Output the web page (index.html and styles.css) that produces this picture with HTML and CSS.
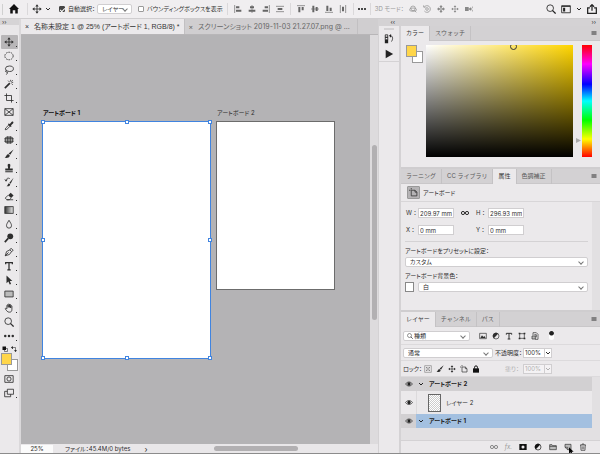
FILE: index.html
```html
<!DOCTYPE html>
<html lang="ja">
<head>
  <meta charset="UTF-8" />
  <meta name="viewport" content="width=device-width, initial-scale=1.0" />
  <title>名称未設定 1</title>
  <link rel="stylesheet" href="styles.css">
</head>
<body>
  <svg class="sprite" aria-hidden="true">
    <symbol id="i-home" viewBox="0 0 12 12"><path class="f" d="M6 0 12 6H10.500V11.500H7.500V7.500H4.500V11.500H1.500V6H0Z"/></symbol>
    <symbol id="i-move" viewBox="0 0 12 12"><path d="M6 2V10M2 6H10"/><path class="f" d="M6 .3 8 3H4ZM6 11.700 4 9H8ZM.3 6 3 4V8ZM11.700 6 9 8V4Z"/></symbol>
    <symbol id="i-chev" viewBox="0 0 12 12"><path class="thick" d="M2 4 6 8 10 4"/></symbol>
    <symbol id="i-search" viewBox="0 0 12 12"><circle cx="5" cy="5" r="4"/><path class="mid" d="M7.700 7.700 11.500 11.500"/></symbol>
    <symbol id="i-al" viewBox="0 0 12 12"><path d="M1 0V12"/><path class="f" d="M3 2H8V5H3ZM3 7H11V10H3Z"/></symbol>
    <symbol id="i-ac" viewBox="0 0 12 12"><path d="M6 0V12"/><path class="f" d="M3 2H9V5H3ZM1 7H11V10H1Z"/></symbol>
    <symbol id="i-ar" viewBox="0 0 12 12"><path d="M11 0V12"/><path class="f" d="M4 2H9V5H4ZM1 7H9V10H1Z"/></symbol>
    <symbol id="i-dist" viewBox="0 0 12 12"><path d="M0 2H12M0 10H12"/><path class="f" d="M2.500 4.500H9.500V7.500H2.500Z"/></symbol>
    <symbol id="i-at" viewBox="0 0 12 12"><path d="M0 1H12"/><path class="f" d="M2 3H5V11H2ZM7 3H10V8H7Z"/></symbol>
    <symbol id="i-am" viewBox="0 0 12 12"><path d="M0 6H12"/><path class="f" d="M2 1H5V11H2ZM7 3H10V9H7Z"/></symbol>
    <symbol id="i-ab" viewBox="0 0 12 12"><path d="M0 11H12"/><path class="f" d="M2 1H5V9H2ZM7 4H10V9H7Z"/></symbol>
    <symbol id="i-disv" viewBox="0 0 12 12"><path d="M2 0V12M10 0V12"/><path class="f" d="M4.500 2.500H7.500V9.500H4.500Z"/></symbol>
    <symbol id="i-dots" viewBox="0 0 12 12"><circle class="f" cx="1.500" cy="6" r="1.500"/><circle class="f" cx="6" cy="6" r="1.500"/><circle class="f" cx="10.500" cy="6" r="1.500"/></symbol>
    <symbol id="i-orbit" viewBox="0 0 12 12"><ellipse cx="6" cy="7" rx="5.500" ry="2.500"/><circle cx="6" cy="5" r="3.500"/><path d="M8 8 11 11"/></symbol>
    <symbol id="i-roll" viewBox="0 0 12 12"><circle cx="6" cy="6" r="2"/><path d="M2 3A5 5 0 1 1 2 9M1 .5V3.200H4"/></symbol>
    <symbol id="i-slide" viewBox="0 0 12 12"><path class="f" d="M6 0 8.500 3H7V4.500H5V3H3.500ZM6 12 3.500 9H5V7.500H7V9H8.500ZM0 6 3 3.500V5H4.500V7H3V8.500ZM12 6 9 8.500V7H7.500V5H9V3.500Z"/><circle cx="6" cy="6" r="1.500"/></symbol>
    <symbol id="i-cam" viewBox="0 0 12 12"><path class="f" d="M-1 3H5.500V9H-1ZM5 6 9 3.500V8.500Z"/><path d="M13 1 9.500 6 13 11"/></symbol>
    <symbol id="i-work" viewBox="0 0 12 12"><path d="M.8 2H11.200V10.500H.8ZM1 3H11"/><path class="f" d="M2.500 4.500H5V9H2.500Z"/></symbol>
    <symbol id="i-share" viewBox="0 0 12 12"><path class="mid" d="M3.500 4.500H.8V11.200H11.200V4.500H8.500M6 8V1M3.500 3.300 6 .8 8.500 3.300"/></symbol>

    <symbol id="i-marq" viewBox="0 0 12 12"><ellipse cx="6" cy="6" rx="5" ry="4.500" stroke-dasharray="2 1"/></symbol>
    <symbol id="i-lasso" viewBox="0 0 12 12"><ellipse cx="6.500" cy="4.500" rx="4.800" ry="3.300"/><path d="M3 6.500C1 7 2 9 3.500 8.500S4 11 2.500 11.500"/></symbol>
    <symbol id="i-wand" viewBox="0 0 12 12"><path class="thick" d="M1 11 7 5"/><path d="M8 1V3M11 4H9M10.500 1.500 9 3M5 2 6.500 3.500M10.500 7 9 5.500"/></symbol>
    <symbol id="i-crop" viewBox="0 0 12 12"><path d="M3 .5V9H11.500M.5 3H9V11.500"/></symbol>
    <symbol id="i-frame" viewBox="0 0 12 12"><path d="M1 2H11V10H1ZM1 2 11 10M11 2 1 10"/></symbol>
    <symbol id="i-drop" viewBox="0 0 12 12"><path d="M1.500 10.500 2 8.500 6 4.500 7.500 6 3.500 10Z"/><path class="f" d="M5.500 3 7 3.500 9 1.200C11-.2 12 1.500 10.800 3L8.500 5 9 6.500 8 7.200 4.800 4Z"/></symbol>
    <symbol id="i-heal" viewBox="0 0 12 12"><rect class="g" x="1.500" y="2.500" width="9" height="7" rx="2"/><path d="M.5 4.500H11.500M.5 7.500H11.500M4.500 1.500V10.500M7.500 1.500V10.500"/></symbol>
    <symbol id="i-brush" viewBox="0 0 12 12"><path class="f" d="M11.500.5 7.500 7 5.500 5.300ZM5 6 7 7.700C6.500 10.500 3.500 11 .8 10.500 3 9.500 2.500 6.500 5 6Z"/></symbol>
    <symbol id="i-stamp" viewBox="0 0 12 12"><path class="f" d="M4.500 3.500C3.500 0 8.500 0 7.500 3.500L7 6.500H10.500V9H1.500V6.500H5ZM1.500 10H10.500V11.200H1.500Z"/></symbol>
    <symbol id="i-hist" viewBox="0 0 12 12"><path class="f" d="M11.500 1 8 8 6.500 7ZM6 7.500 7.500 9C7 11 5 11.500 3 11 5 10 4.500 8 6 7.500Z"/><path d="M1 3 2.500 5 4 3M2.500 5C2 2 5 .5 7 2"/></symbol>
    <symbol id="i-erase" viewBox="0 0 12 12"><path class="f" d="M5 5 8 2 11.500 5.500 8.500 8.500Z"/><path d="M5 5 1.500 8.500 3.500 10.500H6.500L8.500 8.500M3 10.500H11"/></symbol>
    <symbol id="i-grad" viewBox="0 0 12 12"><defs><linearGradient id="gg"><stop stop-color="#333"/><stop offset="1" stop-color="#eee"/></linearGradient></defs><rect x="1" y="2" width="10" height="8" style="fill:url(#gg)"/></symbol>
    <symbol id="i-blur" viewBox="0 0 12 12"><path d="M6 1.500C8 5 9 6 9 8A3 3 0 0 1 3 8C3 6 4 5 6 1.500Z"/></symbol>
    <symbol id="i-dodge" viewBox="0 0 12 12"><circle class="f" cx="7.500" cy="4" r="3.500"/><path class="thick" d="M5 6.500 1 11"/></symbol>
    <symbol id="i-pen" viewBox="0 0 12 12"><path d="M1.500 10.500 3 5.500 7 3.500 9 5.500 6.500 9ZM1.500 10.500 5.500 6.500M7 3.500 8.500 1.500 11 4 9 5.500"/></symbol>
    <symbol id="i-text" viewBox="0 0 12 12"><path class="mid" d="M2 4V2H10V4M6 2V10.500M4 10.500H8"/></symbol>
    <symbol id="i-arrow" viewBox="0 0 12 12"><path class="f" d="M3 .5V10L5.300 7.800 6.800 11.500 8.500 10.800 7 7.300H10Z"/></symbol>
    <symbol id="i-rect" viewBox="0 0 12 12"><path class="g" d="M1 2.500H11V9.500H1Z"/></symbol>
    <symbol id="i-hand" viewBox="0 0 12 12"><path d="M3.500 7V3C3.500 2 5 2 5 3V5.500M5 5V1.800C5 1 6.500 1 6.500 1.800V5.500M6.500 5V2.300C6.500 1.500 8 1.500 8 2.300V6M8 6V3.500C8 3 9.500 3 9.500 3.700V7.500C9.500 10 8.500 11 6.500 11 4 11 3.500 9.500 1.500 7 1.500 6 2.800 6 3.500 7"/></symbol>
    <symbol id="i-swap" viewBox="0 0 12 12"><path d="M3 6V3H9V10"/><path class="f" d="M0 3 3.500 0V6ZM9 12 6 8.500H12Z"/></symbol>
    <symbol id="i-def" viewBox="0 0 12 12"><path d="M5 5H11V11H5Z"/><path class="f" d="M1 1H8V8H1Z"/></symbol>
    <symbol id="i-mask" viewBox="0 0 12 12"><path d="M1 2H11V10H1Z"/><circle cx="6" cy="6" r="2.500"/></symbol>
    <symbol id="i-screen" viewBox="0 0 12 12"><path d="M4 1.500H11.500V7.500H4ZM4 4H.8V10.500H8V7.500"/></symbol>

    <symbol id="i-hpanel" viewBox="0 0 12 12"><path d="M1.500 1H4.500V4H1.500ZM1.500 4H4.500V7H1.500ZM7 2C11 2 11 6 9 9"/><path class="f" d="M1 7H5V11H1ZM6 2 8.500 0V4.500Z"/></symbol>
    <symbol id="i-play" viewBox="0 0 12 12"><path class="f" d="M2 1 11 6 2 11Z"/></symbol>
    <symbol id="i-menu" viewBox="0 0 12 12"><path d="M1 3H11M1 5H11M1 7H11M1 9H11"/></symbol>
    <symbol id="i-board" viewBox="0 0 12 12"><path d="M3 0V2M0 3H2M3 3H8L10.500 5.500V10.500H3ZM8 3V5.500H10.500"/></symbol>
    <symbol id="i-link" viewBox="0 0 12 12"><circle class="mid" cx="3" cy="6" r="2.400"/><circle class="mid" cx="9" cy="6" r="2.400"/></symbol>
    <symbol id="i-img" viewBox="0 0 12 12"><path d="M1 2H11V10H1Z"/><path class="f" d="M2 9 4.500 5 6.500 7.500 8 6 10 9Z"/></symbol>
    <symbol id="i-adj" viewBox="0 0 12 12"><circle cx="6" cy="6" r="4.500"/><path class="f" d="M9.200 2.800A4.500 4.500 0 0 0 2.800 9.200Z"/></symbol>
    <symbol id="i-shape" viewBox="0 0 12 12"><path d="M2.500 2.500H9.500V9.500H2.500Z"/><path class="f" d="M1 1H3.500V3.500H1ZM8.500 1H11V3.500H8.500ZM1 8.500H3.500V11H1ZM8.500 8.500H11V11H8.500Z"/></symbol>
    <symbol id="i-smart" viewBox="0 0 12 12"><path d="M3 5V1H8L10.500 3.500V11H6"/><path class="g" d="M1.500 6H6.500V10.500H1.500ZM5 4H8V8"/></symbol>
    <symbol id="i-lockpx" viewBox="0 0 12 12"><path d="M1 1H11V11H1Z"/><path class="f" d="M3 3H5V5H3ZM7 3H9V5H7ZM5 5H7V7H5ZM3 7H5V9H3ZM7 7H9V9H7Z"/></symbol>
    <symbol id="i-lock" viewBox="0 0 12 12"><path class="f" d="M1.500 5H10.500V11.500H1.500Z"/><path class="mid" d="M3.800 5.500V3.500A2.200 2.200 0 0 1 8.200 3.500V5.500"/></symbol>
    <symbol id="i-eye" viewBox="0 0 12 12"><path d="M.8 6C3.500 2 8.500 2 11.200 6 8.500 10 3.500 10 .8 6Z"/><circle class="f" cx="6" cy="6" r="2.500"/></symbol>
    <symbol id="i-addmask" viewBox="0 0 12 12"><path class="f" fill-rule="evenodd" d="M.5 1.500H11.500V10.500H.5ZM8.300 6A2.300 2.300 0 1 0 3.700 6 2.300 2.300 0 1 0 8.300 6Z"/></symbol>
    <symbol id="i-folder" viewBox="0 0 12 12"><path class="g" d="M1 10V2.500H4.500L5.500 4H11V10ZM1 5H11"/></symbol>
    <symbol id="i-new" viewBox="0 0 12 12"><path class="g" d="M1.500 2H10.500V10H5.500L1.500 6.500ZM5.500 10V6.500H1.500"/></symbol>
    <symbol id="i-trash" viewBox="0 0 12 12"><path d="M1.500 3H10.500M4.500 3V1.500H7.500V3M2.500 3 3 11H9L9.500 3M4.800 5V9.500M7.200 5V9.500"/></symbol>
  </svg>

  <header class="options">
    <span class="grip"></span>
    <button class="ico big home" aria-label="ホーム"><svg><use href="#i-home"/></svg></button>
    <span class="sep"></span>
    <button class="ico big" aria-label="移動ツール"><svg><use href="#i-move"/></svg></button>
    <button class="ico tiny more" aria-label="プリセット"><svg><use href="#i-chev"/></svg></button>
    <label class="check"><input type="checkbox" checked>自動選択：</label>
    <span class="select layer-kind"><select aria-label="自動選択の対象"><option>レイヤー</option></select></span>
    <label class="check"><input type="checkbox">バウンディングボックスを表示</label>
    <span class="sep"></span>
    <div class="group">
      <button class="ico" aria-label="左揃え"><svg><use href="#i-al"/></svg></button>
      <button class="ico" aria-label="中央揃え"><svg><use href="#i-ac"/></svg></button>
      <button class="ico" aria-label="右揃え"><svg><use href="#i-ar"/></svg></button>
      <button class="ico" aria-label="上下に分布"><svg><use href="#i-dist"/></svg></button>
    </div>
    <span class="sep"></span>
    <div class="group">
      <button class="ico" aria-label="上揃え"><svg><use href="#i-at"/></svg></button>
      <button class="ico" aria-label="中段揃え"><svg><use href="#i-am"/></svg></button>
      <button class="ico" aria-label="下揃え"><svg><use href="#i-ab"/></svg></button>
      <button class="ico" aria-label="左右に分布"><svg><use href="#i-disv"/></svg></button>
    </div>
    <span class="sep"></span>
    <button class="ico dark" aria-label="その他"><svg><use href="#i-dots"/></svg></button>
    <span class="sep"></span>
    <span class="mode3d">3D モード：</span>
    <div class="group dim">
      <button class="ico" aria-label="回転"><svg><use href="#i-orbit"/></svg></button>
      <button class="ico" aria-label="ロール"><svg><use href="#i-roll"/></svg></button>
      <button class="ico" aria-label="パン"><svg><use href="#i-slide"/></svg></button>
      <button class="ico" aria-label="スライド"><svg><use href="#i-move"/></svg></button>
      <button class="ico" aria-label="ズーム"><svg><use href="#i-cam"/></svg></button>
    </div>
    <div class="right">
      <button class="ico big" aria-label="検索"><svg><use href="#i-search"/></svg></button>
      <button class="ico big" aria-label="ワークスペース"><svg><use href="#i-work"/></svg></button>
      <button class="ico tiny" aria-label="ワークスペースを選択"><svg><use href="#i-chev"/></svg></button>
      <button class="ico big" aria-label="共有"><svg><use href="#i-share"/></svg></button>
    </div>
  </header>

  <main class="workspace">
    <aside class="tools">
      <div class="tools-head">››</div>
      <button class="tool on" aria-label="移動"><svg><use href="#i-move"/></svg></button>
      <button class="tool" aria-label="楕円形選択"><svg><use href="#i-marq"/></svg></button>
      <button class="tool" aria-label="なげなわ"><svg><use href="#i-lasso"/></svg></button>
      <button class="tool" aria-label="自動選択"><svg><use href="#i-wand"/></svg></button>
      <button class="tool" aria-label="切り抜き"><svg><use href="#i-crop"/></svg></button>
      <button class="tool single" aria-label="フレーム"><svg><use href="#i-frame"/></svg></button>
      <button class="tool" aria-label="スポイト"><svg><use href="#i-drop"/></svg></button>
      <button class="tool" aria-label="修復"><svg><use href="#i-heal"/></svg></button>
      <button class="tool" aria-label="ブラシ"><svg><use href="#i-brush"/></svg></button>
      <button class="tool" aria-label="スタンプ"><svg><use href="#i-stamp"/></svg></button>
      <button class="tool" aria-label="ヒストリーブラシ"><svg><use href="#i-hist"/></svg></button>
      <button class="tool" aria-label="消しゴム"><svg><use href="#i-erase"/></svg></button>
      <button class="tool" aria-label="グラデーション"><svg><use href="#i-grad"/></svg></button>
      <button class="tool" aria-label="ぼかし"><svg><use href="#i-blur"/></svg></button>
      <button class="tool" aria-label="覆い焼き"><svg><use href="#i-dodge"/></svg></button>
      <button class="tool" aria-label="ペン"><svg><use href="#i-pen"/></svg></button>
      <button class="tool" aria-label="文字"><svg><use href="#i-text"/></svg></button>
      <button class="tool" aria-label="パス選択"><svg><use href="#i-arrow"/></svg></button>
      <button class="tool" aria-label="長方形"><svg><use href="#i-rect"/></svg></button>
      <button class="tool" aria-label="手のひら"><svg><use href="#i-hand"/></svg></button>
      <button class="tool single" aria-label="ズーム"><svg><use href="#i-search"/></svg></button>
      <button class="tool" aria-label="ツールバーを編集"><svg><use href="#i-dots"/></svg></button>
      <div class="swap">
        <button class="ico tiny" aria-label="初期設定"><svg><use href="#i-def"/></svg></button>
        <button class="ico tiny" aria-label="入れ替え"><svg><use href="#i-swap"/></svg></button>
      </div>
      <div class="swatch"><span class="back"></span><span class="fore"></span></div>
      <button class="tool single" aria-label="クイックマスク"><svg><use href="#i-mask"/></svg></button>
      <button class="tool" aria-label="スクリーンモード"><svg><use href="#i-screen"/></svg></button>
    </aside>

    <section class="document">
      <nav class="doc-tabs">
        <button class="doc-tab on"><span class="close">×</span>名称未設定 1 @ 25% (アートボード 1, RGB/8) *</button>
        <button class="doc-tab"><span class="close">×</span>スクリーンショット 2019-11-03 21.27.07.png @ ...</button>
      </nav>
      <div class="view">
        <div class="canvas">
          <div class="artboard one">
            <span class="name">アートボード 1</span>
            <i class="h tl"></i><i class="h tc"></i><i class="h tr"></i>
            <i class="h ml"></i><i class="h mr"></i>
            <i class="h bl"></i><i class="h bc"></i><i class="h br"></i>
          </div>
          <div class="artboard two"><span class="name">アートボード 2</span></div>
        </div>
        <div class="vscroll"><span></span></div>
      </div>
      <footer class="status">
        <span class="zoom">25%</span>
        <span class="info">ファイル：45.4M/0 bytes</span>
        <span class="next">›</span>
        <div class="hscroll"><span></span></div>
      </footer>
    </section>

    <aside class="dock">
      <div class="dock-head">‹‹</div>
      <div class="dock-icons">
        <button class="ico big" aria-label="ヒストリー"><svg><use href="#i-hpanel"/></svg></button>
        <button class="ico big" aria-label="アクション"><svg><use href="#i-play"/></svg></button>
      </div>
    </aside>

    <aside class="panels">
      <div class="dock-head end">››</div>

      <section class="panel color">
        <div class="tabs">
          <button class="tab on">カラー</button><button class="tab">スウォッチ</button>
          <button class="ico tiny menu" aria-label="メニュー"><svg><use href="#i-menu"/></svg></button>
        </div>
        <div class="picker">
          <div class="swatch"><span class="back"></span><span class="fore"></span></div>
          <div class="field"><span class="ring"></span></div>
          <div class="hue"><span class="pointer"></span></div>
        </div>
      </section>

      <section class="panel props">
        <div class="tabs">
          <button class="tab">ラーニング</button><button class="tab">CC ライブラリ</button><button class="tab on">属性</button><button class="tab">色調補正</button>
          <button class="ico tiny menu" aria-label="メニュー"><svg><use href="#i-menu"/></svg></button>
        </div>
        <div class="props-title"><span class="badge ico"><svg><use href="#i-board"/></svg></span>アートボード</div>
        <div class="props-body">
          <div class="size">
            <label for="w">W：</label><input id="w" type="text" value="209.97 mm">
            <span class="ico"><svg><use href="#i-link"/></svg></span>
            <label for="h">H：</label><input id="h" type="text" value="296.93 mm">
            <label for="x">X：</label><input id="x" type="text" value="0 mm">
            <span></span>
            <label for="y">Y：</label><input id="y" type="text" value="0 mm">
          </div>
          <div class="preset">
            <label for="preset">アートボードをプリセットに設定：</label>
            <span class="select"><select id="preset"><option>カスタム</option></select></span>
            <label for="bg">アートボード背景色：</label>
            <div class="bg-row">
              <span class="chip"></span>
              <span class="select"><select id="bg"><option>白</option></select></span>
            </div>
          </div>
        </div>
      </section>

      <section class="panel layers">
        <div class="tabs">
          <button class="tab on">レイヤー</button><button class="tab">チャンネル</button><button class="tab">パス</button>
          <button class="ico tiny menu" aria-label="メニュー"><svg><use href="#i-menu"/></svg></button>
        </div>
        <div class="bar filter">
          <span class="select kind"><svg><use href="#i-search"/></svg><select aria-label="フィルター"><option>種類</option></select></span>
          <div class="filters">
            <button class="ico" aria-label="ピクセル"><svg><use href="#i-img"/></svg></button>
            <button class="ico" aria-label="調整"><svg><use href="#i-adj"/></svg></button>
            <button class="ico" aria-label="テキスト"><svg><use href="#i-text"/></svg></button>
            <button class="ico" aria-label="シェイプ"><svg><use href="#i-shape"/></svg></button>
            <button class="ico" aria-label="スマートオブジェクト"><svg><use href="#i-smart"/></svg></button>
          </div>
          <span class="toggle"></span>
        </div>
        <div class="bar">
          <span class="select blend"><select aria-label="描画モード"><option>通常</option></select></span>
          <label for="op">不透明度：</label>
          <span class="amount"><input id="op" type="text" value="100%"><button aria-label="不透明度を調整"><svg><use href="#i-chev"/></svg></button></span>
        </div>
        <div class="bar lock">
          <span>ロック：</span>
          <div class="locks">
            <button class="ico soft" aria-label="透明ピクセル"><svg><use href="#i-lockpx"/></svg></button>
            <button class="ico" aria-label="画像ピクセル"><svg><use href="#i-brush"/></svg></button>
            <button class="ico" aria-label="位置"><svg><use href="#i-move"/></svg></button>
            <button class="ico" aria-label="自動ネスト"><svg><use href="#i-board"/></svg></button>
            <button class="ico dark" aria-label="すべて"><svg><use href="#i-lock"/></svg></button>
          </div>
          <label class="off" for="fill">塗り：</label>
          <span class="amount off"><input id="fill" type="text" value="100%" disabled><button aria-label="塗りを調整" disabled><svg><use href="#i-chev"/></svg></button></span>
        </div>
        <ul class="list">
          <li class="row group-row">
            <span class="eye ico"><svg><use href="#i-eye"/></svg></span>
            <div class="cell"><span class="ico tiny"><svg><use href="#i-chev"/></svg></span>アートボード 2</div>
          </li>
          <li class="row layer">
            <span class="eye ico"><svg><use href="#i-eye"/></svg></span>
            <div class="cell"><span class="thumb"></span>レイヤー 2</div>
          </li>
          <li class="row group-row selected">
            <span class="eye ico"><svg><use href="#i-eye"/></svg></span>
            <div class="cell"><span class="ico tiny"><svg><use href="#i-chev"/></svg></span>アートボード 1</div>
          </li>
        </ul>
        <div class="actions">
          <button class="ico soft" aria-label="リンク"><svg><use href="#i-link"/></svg></button>
          <button class="fx" aria-label="レイヤースタイル">fx.</button>
          <button class="ico dark" aria-label="マスクを追加"><svg><use href="#i-addmask"/></svg></button>
          <button class="ico dark" aria-label="調整レイヤー"><svg><use href="#i-adj"/></svg></button>
          <button class="ico" aria-label="グループ"><svg><use href="#i-folder"/></svg></button>
          <button class="ico new" aria-label="新規レイヤー"><svg><use href="#i-new"/></svg><svg class="cursor"><use href="#i-arrow"/></svg></button>
          <button class="ico" aria-label="削除"><svg><use href="#i-trash"/></svg></button>
        </div>
      </section>
    </aside>
  </main>
</body>
</html>
```
FILE: styles.css
```css
* {
  box-sizing: border-box;
}

body {
  margin: 0;
  height: 100vh;
  display: flex;
  flex-direction: column;
  overflow: hidden;
  background: #ebe9eb;
  border-bottom: 1px solid #8c8c8c;
  color: #2e2e2e;
  font: 6px/8px Inter, "Noto Sans CJK JP", sans-serif;
  font-feature-settings: "palt";
  white-space: nowrap;
}

button, input, select {
  font: inherit;
  font-feature-settings: inherit;
  color: inherit;
  margin: 0;
  padding: 0;
  border: 0;
  background: none;
}

.sprite {
  position: absolute;
  width: 0;
  height: 0;
}

svg {
  display: block;
  width: 100%;
  height: 100%;
  overflow: visible;
  fill: none;
  stroke: currentColor;
  stroke-width: 1;
}

.f {
  fill: currentColor;
  stroke: none;
}

.g {
  fill: #bbb;
}

.mid {
  stroke-width: 1.5;
}

.thick {
  stroke-width: 2;
}

.ico {
  display: block;
  flex: none;
  width: 8px;
  height: 8px;
}

.ico.big {
  width: 10px;
  height: 10px;
}

.ico.tiny {
  width: 6px;
  height: 6px;
}

.dark {
  color: #111;
}

.soft {
  color: #888;
}

/* option bar */
.options {
  flex: none;
  display: flex;
  align-items: center;
  height: 19px;
  padding: 0 3px 0 2px;
  background: #f0eef0;
  border-bottom: 1px solid #cfcdcf;
}

.grip {
  width: 1px;
  height: 11px;
  background: #d0d0d0;
}

.home {
  margin: 0 4px 0 6px;
  color: #111;
}

.sep {
  flex: none;
  width: 1px;
  height: 12px;
  margin: 0 4px;
  background: #dad8da;
}

.more {
  margin: 0 8px 0 3px;
}

.check {
  display: flex;
  align-items: center;
  gap: 3px;
}

.check input {
  appearance: none;
  width: 6px;
  height: 6px;
  background: #fff;
  border: 1px solid #999;
  border-radius: 1px;
}

.check input:checked {
  background: #444;
  border-color: #444;
}

.check input:checked::after {
  content: "";
  display: block;
  width: 2px;
  height: 4px;
  margin-left: 1px;
  border: solid #fff;
  border-width: 0 1px 1px 0;
  transform: rotate(45deg);
}

.select {
  position: relative;
  display: flex;
  align-items: center;
  height: 10px;
  background: #fff;
  border: 1px solid #d0ced0;
  border-radius: 2px;
}

.select::after {
  content: "";
  position: absolute;
  right: 4px;
  top: 2px;
  width: 3px;
  height: 3px;
  border: solid #777;
  border-width: 0 1px 1px 0;
  transform: rotate(45deg);
}

.select select {
  appearance: none;
  width: 100%;
  height: 8px;
  padding-left: 4px;
}

.layer-kind {
  width: 35px;
  margin: 0 6px 0 2px;
}

.group {
  display: flex;
  gap: 6px;
  margin: 0 2px;
  color: #666;
}

.mode3d {
  color: #999;
}

.group.dim {
  margin-left: 5px;
  color: #888;
}

.right {
  display: flex;
  align-items: center;
  gap: 5px;
  margin-left: auto;
  color: #222;
}

/* workspace */
.workspace {
  flex: 1;
  min-height: 0;
  display: flex;
}

.tools {
  flex: none;
  width: 21px;
  border-right: 2px solid #dad8da;
}

.tools-head {
  height: 16px;
  padding-left: 2px;
  background: linear-gradient(#d6d4d6 6px, #e9e7e9 6px);
  line-height: 6px;
}

.tool {
  display: block;
  position: relative;
  width: 17px;
  height: 14px;
  margin-left: 1px;
  padding: 2px 4px 2px 3px;
}

.tool.on {
  background: #b8b6b8;
  border-radius: 1px;
}

.tool:not(.single)::after {
  content: "";
  position: absolute;
  right: 1px;
  bottom: 2px;
  width: 1px;
  height: 1px;
  background: #333;
}

.swap {
  display: flex;
  gap: 3px;
  padding: 3px 1px 1px 2px;
  color: #111;
}

.swatch {
  flex: none;
  display: grid;
  width: 17px;
  height: 18px;
  margin-left: 1px;
}

.swatch span {
  grid-area: 1 / 1;
  width: 11px;
  height: 12px;
  border: 1px solid #999;
}

.swatch .fore {
  background: #ffd64a;
}

.swatch .back {
  place-self: end;
  background: #fff;
}

.tools .swatch {
  margin-bottom: 1px;
}

.document {
  flex: 1;
  min-width: 0;
  display: flex;
  flex-direction: column;
}

.doc-tabs {
  flex: none;
  display: flex;
  height: 16px;
  background: #d0ced0;
  border-bottom: 1px solid #b8b6b8;
}

.doc-tab {
  padding: 0 7px 0 4px;
  border-right: 1px solid #c2c0c2;
  color: #666;
  font-size: 7px;
}

.doc-tab.on {
  padding-right: 4px;
  background: #ebe9eb;
  color: #333;
  font-family: "Liberation Sans", "Noto Sans CJK JP", sans-serif;
}

.close {
  margin-right: 5px;
}

.view {
  flex: 1;
  min-height: 0;
  display: flex;
}

.canvas {
  flex: 1;
  position: relative;
  background: #b4b3b5;
}

.artboard {
  position: absolute;
  background: #fff;
}

.artboard.one {
  left: 21px;
  top: 86px;
  width: 169px;
  height: 238px;
  border: 1px solid #4084e0;
}

.artboard.two {
  left: 195px;
  top: 86px;
  width: 119px;
  height: 169px;
  border: 1px solid #6c6c6c;
}

.name {
  position: absolute;
  left: 0;
  top: -13px;
}

.one .name {
  color: #111;
  font-weight: bold;
}

.h {
  position: absolute;
  width: 4px;
  height: 4px;
  background: #fff;
  border: 1px solid #4084e0;
}

.tl, .tc, .tr { top: -2px; }
.ml, .mr { top: calc(50% - 2px); }
.bl, .bc, .br { bottom: -2px; }
.tl, .ml, .bl { left: -2px; }
.tc, .bc { left: calc(50% - 2px); }
.tr, .mr, .br { right: -2px; }

.vscroll {
  flex: none;
  width: 8px;
  padding: 110px 1px 0 2px;
  background: #dddbdd;
}

.vscroll span {
  display: block;
  width: 5px;
  height: 175px;
  border-radius: 3px;
  background: #b2b0b2;
}

.status {
  flex: none;
  display: flex;
  align-items: center;
  height: 9px;
  background: #e9e7e9;
}

.zoom {
  width: 32px;
  background: #fbfbfb;
  text-align: center;
}

.info {
  margin-left: 12px;
}

.next {
  margin-left: 14px;
  font-size: 8px;
}

.hscroll {
  flex: 1;
  margin-left: 4px;
  padding-left: 63px;
}

.hscroll span {
  display: block;
  width: 84px;
  height: 5px;
  border-radius: 3px;
  background: #b2b0b2;
}

/* docks */
.dock {
  flex: none;
  width: 23px;
  border: solid #d4d2d4;
  border-width: 0 2px 0 1px;
}

.dock-head {
  height: 7px;
  padding-right: 4px;
  background: #d4d2d4;
  line-height: 6px;
  text-align: right;
}

.dock-icons {
  display: flex;
  flex-direction: column;
  align-items: center;
  gap: 5px;
  height: 36px;
  padding-top: 8px;
  border-bottom: 1px solid #d4d2d4;
  color: #222;
}

.dock-icons::before {
  content: "";
  position: absolute;
  width: 10px;
  height: 2px;
  margin-top: -6px;
  background: #d4d2d4;
}

.panels {
  flex: none;
  width: 199px;
  display: flex;
  flex-direction: column;
}

.panel {
  flex: none;
}

.tabs {
  display: flex;
  align-items: center;
  height: 15px;
  background: #d3d1d3;
  border-bottom: 1px solid #c9c7c9;
}

.tab {
  height: 15px;
  padding: 0 5px;
  border-right: 1px solid #c4c2c4;
  color: #5a5a5a;
  font-feature-settings: normal;
}

.tab.on {
  background: #ebe9eb;
  color: #333;
}

.menu {
  margin: 0 3px 0 auto;
}

.color, .props {
  border-bottom: 2px solid #cfcdcf;
}

.picker {
  display: flex;
  padding: 4px 8px 10px 4px;
}

.field {
  flex: 1;
  height: 112px;
  margin: 0 9px 0 3px;
  padding-left: 84px;
  overflow: hidden;
  background: linear-gradient(transparent, #000), linear-gradient(90deg, #fff, #ffd500);
}

.ring {
  display: block;
  width: 7px;
  height: 7px;
  margin-top: -2px;
  border: 1px solid #333;
  border-radius: 50%;
}

.hue {
  position: relative;
  width: 10px;
  height: 112px;
  background: linear-gradient(#f00, #f0f 17%, #00f 35%, #0ff 50%, #0f0 67%, #ff0 84%, #f00);
}

.pointer {
  position: absolute;
  left: -6px;
  top: 93px;
  width: 5px;
  height: 5px;
  background: #aaa;
  clip-path: polygon(0 0, 100% 50%, 0 100%);
}

/* properties */
.props-title {
  display: flex;
  align-items: center;
  gap: 3px;
  height: 18px;
  padding-left: 6px;
  border-bottom: 1px solid #d8d6d8;
}

.ico.badge {
  width: 13px;
  height: 13px;
  padding: 1px;
  background: #b5b3b5;
  border: 1px solid #999;
  border-radius: 1px;
}

.props-body {
  height: 108px;
  padding: 6px 4px 0;
  border-right: 8px solid #e2e0e2;
}

.size {
  display: grid;
  grid-template-columns: 13px 36px 21px 13px 36px;
  align-items: center;
  row-gap: 7px;
  padding-bottom: 6px;
  border-bottom: 1px solid #d4d2d4;
}

.size label {
  padding-left: 1px;
  font-feature-settings: normal;
}

.size .ico {
  justify-self: center;
}

.size input {
  width: 100%;
  height: 10px;
  padding: 0 1px;
  background: #fff;
  border: 1px solid #d0ced0;
}

.preset label {
  display: block;
  padding: 5px 0 2px;
}

.bg-row {
  display: flex;
  align-items: center;
  gap: 4px;
}

.bg-row .select {
  flex: 1;
}

.chip {
  width: 9px;
  height: 10px;
  background: #fff;
  border: 1px solid #888;
}

/* layers */
.layers {
  flex: 1;
  display: flex;
  flex-direction: column;
}

.bar {
  flex: none;
  display: flex;
  align-items: center;
  height: 16px;
  padding-left: 2px;
  border-bottom: 1px solid #dcdadc;
}

.bar.filter {
  height: 18px;
}

.kind {
  width: 67px;
  padding-left: 3px;
}

.kind svg {
  flex: none;
  width: 6px;
  height: 6px;
}

.kind select {
  padding-left: 1px;
}

.filters {
  display: flex;
  gap: 5px;
  margin-left: 9px;
}

.toggle {
  width: 5px;
  height: 9px;
  margin-left: 10px;
  border-radius: 3px;
  background: radial-gradient(circle at 50% 2px, #222 2px, #fff 3px);
}

.blend {
  width: 90px;
  margin-right: 2px;
}

.amount {
  display: flex;
  height: 10px;
  margin-left: auto;
  margin-right: 48px;
  background: #fff;
  border: 1px solid #d0ced0;
}

.amount input {
  width: 20px;
  padding-left: 1px;
}

.amount button {
  width: 7px;
  padding: 1px 0;
  border-left: 1px solid #d0ced0;
}

.off {
  color: #b0b0b0;
}

label.off {
  margin-left: 25px;
}

.amount.off {
  background: #f4f2f4;
}

.locks {
  display: flex;
  gap: 4px;
  margin-left: 2px;
}

.list {
  flex: 1;
  margin: 0;
  padding: 0;
  list-style: none;
  background: #e2e0e2;
}

.row {
  display: flex;
  height: 14px;
  margin-right: 8px;
}

.row.layer {
  height: 23px;
  background: #ebe9eb;
}

.eye {
  width: 15px;
  height: 100%;
  padding: 0 3px 0 4px;
  color: #222;
}

.cell {
  flex: 1;
  display: flex;
  align-items: center;
  padding-left: 2px;
}

.group-row {
  background: #d2d0d2;
}

.group-row .cell {
  gap: 5px;
  color: #222;
  font-weight: bold;
}

.layer .cell {
  gap: 5px;
  padding-left: 11px;
  border-left: 1px solid #dcdadc;
}

.selected .cell {
  background: #a3c0e0;
}

.thumb {
  width: 13px;
  height: 18px;
  border: 1px solid #666;
  background: repeating-conic-gradient(#ccc 0 25%, #fff 0 50%) 0 0 / 2px 2px;
}

.actions {
  flex: none;
  display: flex;
  align-items: center;
  justify-content: flex-end;
  gap: 7px;
  height: 13px;
  padding-right: 13px;
  border-top: 1px solid #d4d2d4;
}

.fx {
  color: #999;
  font-style: italic;
}

.new {
  position: relative;
}

.cursor {
  position: absolute;
  left: 3px;
  top: 4px;
  width: 8px;
  height: 8px;
  color: #000;
}
```
